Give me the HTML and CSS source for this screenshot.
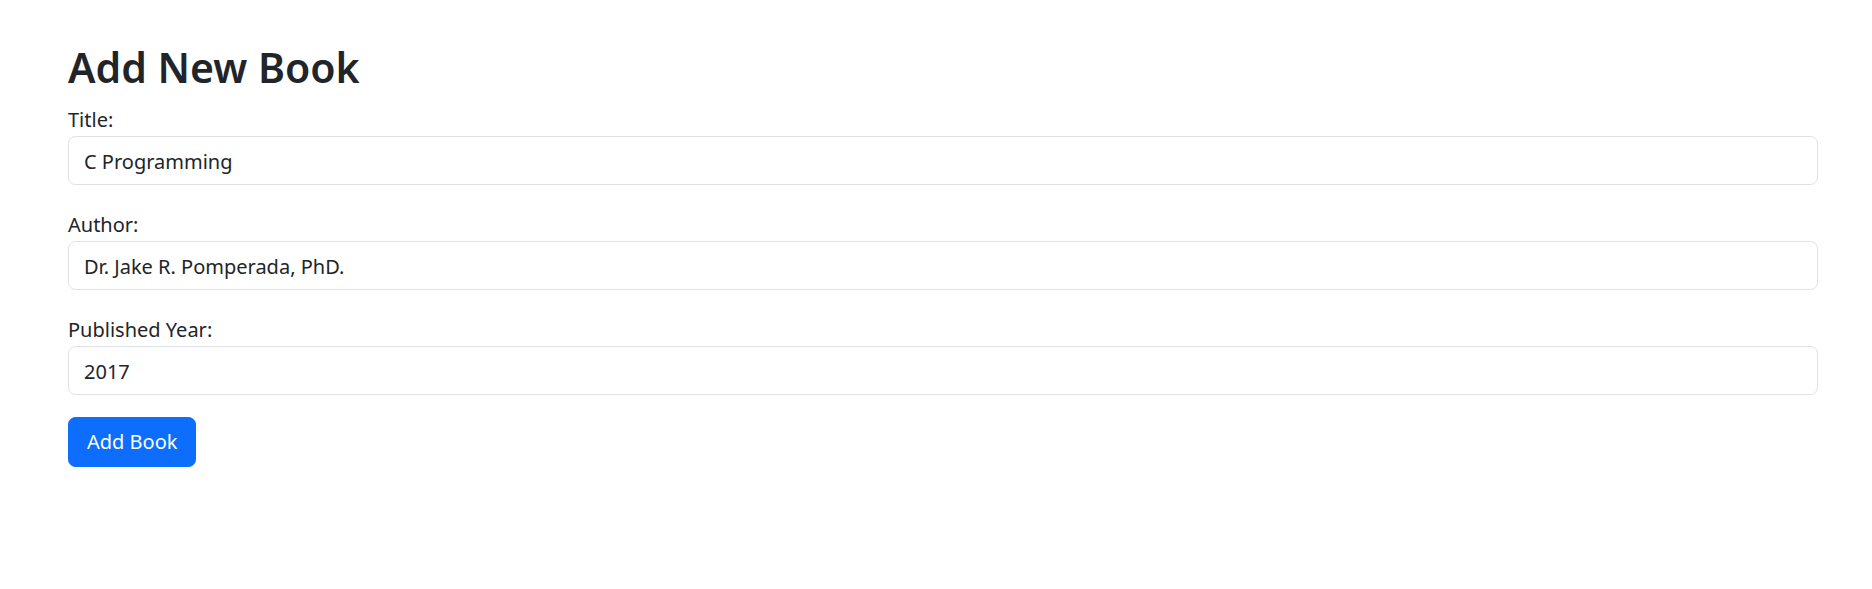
FILE: index.html
```html
<!DOCTYPE html>
<html lang="en">
<head>
<meta charset="utf-8">
<title>Add New Book</title>
<link rel="stylesheet" href="styles.css">
</head>
<body>
<main class="page">
  <h2 class="page-title">Add New Book</h2>
  <form class="book-form">
    <div class="form-group">
      <label class="form-label" for="title">Title:</label>
      <input class="form-control" id="title" type="text" value="C Programming">
    </div>
    <div class="form-group">
      <label class="form-label" for="author">Author:</label>
      <input class="form-control" id="author" type="text" value="Dr. Jake R. Pomperada, PhD.">
    </div>
    <div class="form-group">
      <label class="form-label" for="year">Published Year:</label>
      <input class="form-control" id="year" type="text" value="2017">
    </div>
    <button class="btn-primary" type="button">Add Book</button>
  </form>
</main>
</body>
</html>
```
FILE: styles.css
```css
* { box-sizing: border-box; }
html, body { margin: 0; padding: 0; background: #fff; }
body {
  font-family: "Noto Sans", "Open Sans", sans-serif;
  color: #212529;
  font-size: 20px;
  line-height: 30px;
}
.page {
  padding: 43px 54px 0 68px;
}
.page-title {
  margin: 0 0 14px;
  font-size: 41px;
  line-height: 48px;
  font-weight: 600;
  color: #212529;
}
.book-form {
  display: flex;
  flex-direction: column;
  align-items: flex-start;
}
.form-group {
  width: 100%;
  margin-bottom: 25px;
}
.form-group:last-of-type { margin-bottom: 22px; }
.form-label {
  display: block;
  margin-bottom: 1px;
  font-size: 20px;
  line-height: 30px;
}
.form-control {
  display: block;
  width: 100%;
  height: 49px;
  padding: 9px 15px 8px;
  font-family: "Noto Sans", "Open Sans", sans-serif;
  font-size: 20px;
  line-height: 30px;
  color: #212529;
  background: #fff;
  border: 1px solid #dee2e6;
  border-radius: 7.5px;
  outline: none;
}
.btn-primary {
  height: 50px;
  padding: 0 18px;
  font-family: "Noto Sans", "Open Sans", sans-serif;
  font-size: 20px;
  line-height: 30px;
  color: #fff;
  background: #0d6efd;
  border: 1px solid #0d6efd;
  border-radius: 7.5px;
  cursor: pointer;
}
```
